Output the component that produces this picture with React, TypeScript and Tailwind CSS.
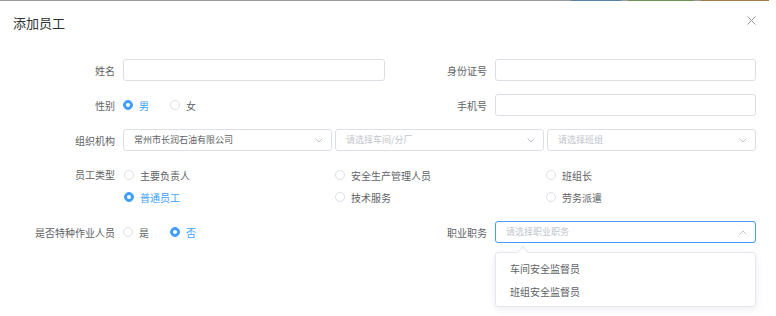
import React from "react";

const font = { fontFamily: '"Noto Sans CJK SC", "Noto Sans", sans-serif' };

const Radio = ({ label, checked, className = "" }: { label: string; checked?: boolean; className?: string }) => (
  <label className={`flex items-center ${className}`}>
    <span
      className={`w-[10px] h-[10px] rounded-full border flex items-center justify-center ${
        checked ? "bg-[#409eff] border-[#409eff]" : "bg-white border-[#dcdfe6]"
      }`}
    >
      {checked && <span className="w-[4px] h-[4px] rounded-full bg-white" />}
    </span>
    <span className={`ml-[6px] ${checked ? "text-[#409eff]" : "text-[#606266]"}`}>{label}</span>
  </label>
);

const Chevron = ({ up }: { up?: boolean }) => (
  <svg width="8" height="5" viewBox="0 0 8 5" className="shrink-0">
    <path
      d={up ? "M0.5 4.5 L4 1 L7.5 4.5" : "M0.5 0.5 L4 4 L7.5 0.5"}
      fill="none"
      stroke="#c0c4cc"
      strokeWidth="1"
    />
  </svg>
);

const Input = ({ w }: { w: string }) => (
  <div className={`${w} h-[22px] border border-[#dcdfe6] rounded-[3px] bg-white`} />
);

const Select = ({ text, placeholder, active }: { text?: string; placeholder?: string; active?: boolean }) => (
  <div
    className={`flex-1 h-[22px] border rounded-[3px] flex items-center justify-between pl-[10px] pr-[8px] text-[9px] ${
      active ? "border-[#409eff]" : "border-[#dcdfe6]"
    }`}
  >
    <span className={text ? "text-[#606266]" : "text-[#c0c4cc]"}>{text ?? placeholder}</span>
    <Chevron up={active} />
  </div>
);

export default function App() {
  return (
    <div className="w-[776px] h-[316px] bg-white relative overflow-hidden text-[10px]" style={font}>
      {/* page behind the dialog */}
      <div className="flex h-px">
        <div className="flex-1 bg-[#9a9a9a]" />
        <div className="w-[50px] bg-[#5b82ac]" />
        <div className="w-[7px] bg-[#9a9a9a]" />
        <div className="w-[66px] bg-[#6e9452]" />
        <div className="w-[7px] bg-[#9a9a9a]" />
        <div className="w-[68px] bg-[#a07b48]" />
        <div className="w-[7px]" />
      </div>

      <div className="flex items-center justify-between h-[44px] pl-[13px] pr-[20px]">
        <span className="text-[13px] text-[#303133]">添加员工</span>
        <svg width="9" height="9" viewBox="0 0 9 9" className="-mt-[6px]">
          <path d="M0.5 0.5 L8.5 8.5 M8.5 0.5 L0.5 8.5" stroke="#909399" strokeWidth="1" />
        </svg>
      </div>

      <div className="flex flex-col gap-[13px] mt-[14px] text-[#606266]">
        <div className="flex items-center h-[22px]">
          <span className="w-[123px] pr-[8px] text-right">姓名</span>
          <Input w="w-[262px]" />
          <span className="w-[110px] pr-[8px] text-right">身份证号</span>
          <Input w="w-[261px]" />
        </div>

        <div className="flex items-center h-[22px]">
          <span className="w-[123px] pr-[8px] text-right">性别</span>
          <div className="w-[262px] flex items-center">
            <Radio label="男" checked className="mr-[21px]" />
            <Radio label="女" />
          </div>
          <span className="w-[110px] pr-[8px] text-right">手机号</span>
          <Input w="w-[261px]" />
        </div>

        <div className="flex items-center h-[22px]">
          <span className="w-[123px] pr-[8px] text-right">组织机构</span>
          <div className="w-[633px] flex gap-[3px]">
            <Select text="常州市长润石油有限公司" />
            <Select placeholder="请选择车间/分厂" />
            <Select placeholder="请选择班组" />
          </div>
        </div>

        <div className="flex">
          <span className="w-[123px] pr-[8px] text-right leading-[22px]">员工类型</span>
          <div className="w-[633px] grid grid-cols-3">
            {[
              ["主要负责人", false],
              ["安全生产管理人员", false],
              ["班组长", false],
              ["普通员工", true],
              ["技术服务", false],
              ["劳务派遣", false],
            ].map(([l, c]) => (
              <div key={l as string} className="h-[22px] flex items-center pl-px">
                <Radio label={l as string} checked={c as boolean} />
              </div>
            ))}
          </div>
        </div>

        <div className="flex items-center h-[22px]">
          <span className="w-[123px] pr-[8px] text-right">是否特种作业人员</span>
          <div className="w-[262px] flex items-center">
            <Radio label="是" className="mr-[21px]" />
            <Radio label="否" checked />
          </div>
          <span className="w-[110px] pr-[8px] text-right">职业职务</span>
          <div className="w-[261px] flex">
            <Select placeholder="请选择职业职务" active />
          </div>
        </div>
      </div>

      {/* dropdown */}
      <div className="absolute left-[495px] top-[252px] w-[261px] h-[55px] bg-white border border-[#e4e7ed] rounded-[3px] shadow-[0_2px_8px_rgba(0,0,0,0.08)] py-[4px] text-[#606266]">
        <div className="absolute -top-[5px] left-[23px] w-[8px] h-[8px] bg-white border-l border-t border-[#e4e7ed] rotate-45" />
        <div className="h-[23px] flex items-center pl-[14px]">车间安全监督员</div>
        <div className="h-[23px] flex items-center pl-[14px]">班组安全监督员</div>
      </div>
    </div>
  );
}
